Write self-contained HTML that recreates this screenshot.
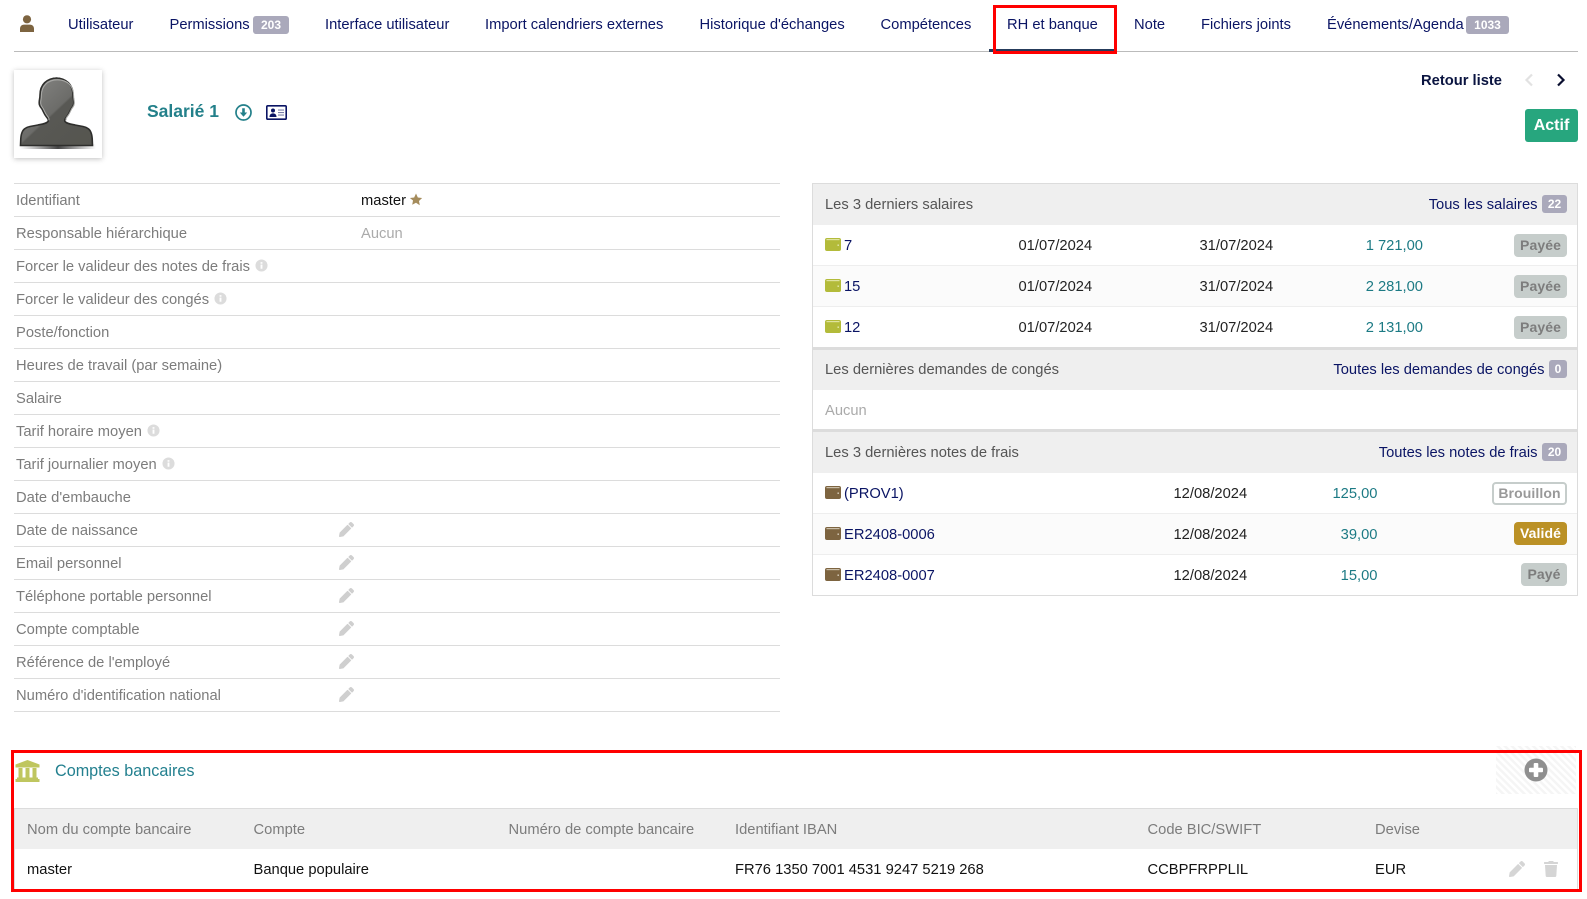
<!DOCTYPE html>
<html lang="fr"><head><meta charset="utf-8"><title>Salarié 1</title>
<style>
html,body{margin:0;padding:0;background:#fff}
body{width:1587px;height:899px;position:relative;overflow:hidden;font-family:"Liberation Sans",Arial,sans-serif;font-size:14.72px;color:#222}
.t{position:absolute;white-space:nowrap;line-height:20px;height:20px;margin-top:1px}
.n{color:#0a1464}
.g{color:#7c7c7c}
.b{position:absolute}
.l{position:absolute;left:14px;width:766px;height:1px;background:#dcdcdc}
.h{position:absolute;left:813px;width:764px;background:#efefef}
.r{position:absolute;left:813px;width:764px;height:1px;background:#eee}
.th{position:absolute;left:813px;width:764px;height:3px;background:#dcdcdc}
.c{position:absolute;background:#aaa9bb;color:#fff;font-weight:bold;font-size:12px;line-height:18px;height:18px;border-radius:3px;text-align:center}
.p{position:absolute;height:23px;line-height:22px;font-size:14px;font-weight:bold;border-radius:4px;text-align:center;background:#c6cdcb;color:#7d7d7d;letter-spacing:.1px;right:20px;box-sizing:border-box}
.tl{color:#1c7a84}
svg{position:absolute;display:block}
</style></head><body>
<svg width="0" height="0" style="position:absolute"><defs>
<symbol id="pen" viewBox="0 0 512 512"><path d="M497.9 142.1l-46.1 46.1c-4.7 4.7-12.3 4.7-17 0l-111-111c-4.7-4.7-4.7-12.3 0-17l46.1-46.1c18.7-18.7 49.1-18.7 67.9 0l60.1 60.1c18.8 18.7 18.8 49.1 0 67.9zM284.2 99.8L21.6 362.4.4 483.9c-2.9 16.4 11.4 30.6 27.8 27.8l121.5-21.3 262.6-262.6c4.7-4.7 4.7-12.3 0-17l-111-111c-4.8-4.7-12.4-4.7-17.1 0z"/></symbol>
<symbol id="inf" viewBox="0 0 14 14"><circle cx="7" cy="7" r="6.5" fill="#dcdcdc"/><rect x="6" y="6" width="2" height="4.5" fill="#fff"/><rect x="6" y="3.4" width="2" height="1.7" fill="#fff"/></symbol>
<symbol id="walg" viewBox="0 0 16 13"><rect width="16" height="13" rx="2" fill="#b3bb3a"/><rect x="1.5" y="1" width="13" height="1.2" fill="#dfe3a0"/><rect x="12.5" y="6.5" width="1.4" height="1.4" fill="#e8ebb8"/></symbol>
<symbol id="walb" viewBox="0 0 16 13"><rect width="16" height="13" rx="2" fill="#7d6440"/><rect x="1.5" y="1" width="13" height="1.2" fill="#c9bda8"/><rect x="12.5" y="6.5" width="1.4" height="1.4" fill="#e0d8c8"/></symbol>
</defs></svg>

<!-- nav -->
<svg style="left:20px;top:15px" width="14" height="17" viewBox="0 0 14 17"><circle cx="7" cy="4.3" r="4.1" fill="#7d6440"/><path d="M0 17v-3.2C0 11 2 9.6 4 9.6h6c2 0 4 1.4 4 4.2V17z" fill="#7d6440"/></svg>
<div class="t n" style="left:68px;top:14px">Utilisateur</div>
<div class="t n" style="left:169.5px;top:14px">Permissions</div><div class="c" style="left:253px;top:16px;width:36px">203</div>
<div class="t n" style="left:325px;top:14px">Interface utilisateur</div>
<div class="t n" style="left:485px;top:14px">Import calendriers externes</div>
<div class="t n" style="left:699.5px;top:14px">Historique d'échanges</div>
<div class="t n" style="left:880.5px;top:14px">Compétences</div>
<div class="t n" style="left:1007px;top:14px">RH et banque</div>
<div class="t n" style="left:1134px;top:14px">Note</div>
<div class="t n" style="left:1201px;top:14px">Fichiers joints</div>
<div class="t n" style="left:1327px;top:14px">Événements/Agenda</div><div class="c" style="left:1466px;top:16px;width:43px">1033</div>
<div class="b" style="left:14px;top:51px;width:1564px;height:1px;background:#bbb"></div>
<div class="b" style="left:989px;top:49px;width:126px;height:3px;background:#263c5c"></div>
<div class="b" style="left:993px;top:5px;width:124px;height:49px;box-sizing:border-box;border:3px solid #f00"></div>

<!-- header -->
<div class="b" style="left:14px;top:70px;width:88px;height:88px;background:#fff;box-shadow:0 1px 5px rgba(0,0,0,.25)"></div>
<svg style="left:14px;top:70px" width="88" height="88" viewBox="0 0 88 88">
<defs><linearGradient id="sh" x1="0" x2="1"><stop offset="0" stop-color="#555" stop-opacity="0"/><stop offset=".5" stop-color="#444"/><stop offset="1" stop-color="#555" stop-opacity="0"/></linearGradient>
<linearGradient id="hd" x1="0" y1="0" x2="1" y2="1"><stop offset="0" stop-color="#8a8a88"/><stop offset=".48" stop-color="#6c6c69"/><stop offset=".5" stop-color="#585854"/><stop offset="1" stop-color="#55554f"/></linearGradient>
<clipPath id="top"><rect x="0" y="0" width="88" height="54"/></clipPath></defs>
<rect x="6" y="74" width="76" height="5" fill="url(#sh)"/>
<path id="sil" d="M43.5 8c-11 0-17.500 7-17.500 17 0 4-.8 4-.8 8 0 3 1.500 4 2.800 6 1.200 2 2 5 4.500 8 1.300 1.500 2.500 3 1.500 4.500-1.500 2-5 2.500-10 3.500l-8 1.500c-4 .8-5.500 2-7 4-1.500 2.500-2 5-2.200 8l-.3 7h72l-.3-7c-.2-3-.7-5.500-2.200-8-1.500-2-3-3.200-7-4l-8-1.500c-5-1-8.500-1.500-10-3.500-1-1.500.2-3 1.500-4.500 2.500-3 3.300-6 4.500-8 1.300-2 2.800-3 2.800-6 0-4-.8-4-.8-8 0-10-6.500-17-17.500-17z" fill="url(#hd)" stroke="#2e2e2c" stroke-width="1.600"/>
<g clip-path="url(#top)"><path transform="translate(43.5 34) scale(.92 .93) translate(-43.5 -34)" d="M43.5 8c-11 0-17.500 7-17.500 17 0 4-.8 4-.8 8 0 3 1.500 4 2.800 6 1.200 2 2 5 4.500 8 1.300 1.500 2.500 3 1.500 4.500M43.5 8c11 0 17.500 7 17.500 17 0 4 .8 4 .8 8 0 3-1.500 4-2.800 6-1.200 2-2 5-4.500 8-1.300 1.500-2.500 3-1.500 4.500" fill="none" stroke="#a9a9a6" stroke-width="1.100"/></g>
</svg>
<div class="t" style="left:147px;top:100px;font-size:17.5px;font-weight:bold;color:#23808a">Salarié 1</div>
<svg style="left:235px;top:104px" width="17" height="17" viewBox="0 0 17 17"><circle cx="8.5" cy="8.5" r="7.5" fill="none" stroke="#23808a" stroke-width="1.700"/><path d="M7.200 4.200h2.600v4.300h2.400L8.500 12.800 4.800 8.500h2.400z" fill="#23808a"/></svg>
<svg style="left:266px;top:105px" width="21" height="15" viewBox="0 0 21 15"><rect x=".8" y=".8" width="19.400" height="13.400" rx="1" fill="#fff" stroke="#0a1464" stroke-width="1.600"/><circle cx="7" cy="5.500" r="2" fill="#0a1464"/><path d="M3.500 12c0-2.500 1.500-3.600 3.500-3.600s3.500 1.100 3.500 3.600z" fill="#0a1464"/><rect x="12" y="4.500" width="6" height="1.100" fill="#7a7fa8"/><rect x="12" y="7" width="6" height="1.100" fill="#7a7fa8"/><rect x="12" y="9.500" width="6" height="1.100" fill="#7a7fa8"/></svg>
<div class="t" style="left:1421px;top:70px;font-weight:bold;color:#0a1440">Retour liste</div>
<svg style="left:1524px;top:73px" width="10" height="14" viewBox="0 0 10 14"><path d="M8 1.500 2.500 7 8 12.500" fill="none" stroke="#e2e2e2" stroke-width="2.200"/></svg>
<svg style="left:1556px;top:73px" width="10" height="14" viewBox="0 0 10 14"><path d="M2 1.500 7.500 7 2 12.500" fill="none" stroke="#0a0f30" stroke-width="2.200"/></svg>
<div class="b" style="left:1525px;top:109px;width:53px;height:33px;background:#27a67e;border-radius:3px;color:#fff;font-weight:bold;font-size:16px;line-height:34px;text-align:center">Actif</div>

<!-- left rows -->
<div class="l" style="top:183px"></div><div class="l" style="top:216px"></div><div class="l" style="top:249px"></div><div class="l" style="top:282px"></div><div class="l" style="top:315px"></div><div class="l" style="top:348px"></div><div class="l" style="top:381px"></div><div class="l" style="top:414px"></div><div class="l" style="top:447px"></div><div class="l" style="top:480px"></div><div class="l" style="top:513px"></div><div class="l" style="top:546px"></div><div class="l" style="top:579px"></div><div class="l" style="top:612px"></div><div class="l" style="top:645px"></div><div class="l" style="top:678px"></div><div class="l" style="top:711px"></div>
<div class="t g" style="left:16px;top:190px">Identifiant</div>
<div class="t" style="left:361px;top:190px;color:#111">master</div>
<svg style="left:409px;top:193px" width="14" height="13" viewBox="0 0 24 24"><path d="M12 1l3.400 7.300 7.900 1-5.800 5.500 1.500 7.900L12 17.900l-7 3.800 1.500-7.900L.7 9.300l7.900-1z" fill="#a58c5c"/></svg>
<div class="t g" style="left:16px;top:223px">Responsable hiérarchique</div>
<div class="t" style="left:361px;top:223px;color:#aaa">Aucun</div>
<div class="t g" style="left:16px;top:256px">Forcer le valideur des notes de frais</div>
<svg style="left:255px;top:259px" width="13" height="13"><use href="#inf"/></svg>
<div class="t g" style="left:16px;top:289px">Forcer le valideur des congés</div>
<svg style="left:214px;top:292px" width="13" height="13"><use href="#inf"/></svg>
<div class="t g" style="left:16px;top:322px">Poste/fonction</div>
<div class="t g" style="left:16px;top:355px">Heures de travail (par semaine)</div>
<div class="t g" style="left:16px;top:388px">Salaire</div>
<div class="t g" style="left:16px;top:421px">Tarif horaire moyen</div>
<svg style="left:147px;top:424px" width="13" height="13"><use href="#inf"/></svg>
<div class="t g" style="left:16px;top:454px">Tarif journalier moyen</div>
<svg style="left:162px;top:457px" width="13" height="13"><use href="#inf"/></svg>
<div class="t g" style="left:16px;top:487px">Date d'embauche</div>
<div class="t g" style="left:16px;top:520px">Date de naissance</div>
<div class="t g" style="left:16px;top:553px">Email personnel</div>
<div class="t g" style="left:16px;top:586px">Téléphone portable personnel</div>
<div class="t g" style="left:16px;top:619px">Compte comptable</div>
<div class="t g" style="left:16px;top:652px">Référence de l'employé</div>
<div class="t g" style="left:16px;top:685px">Numéro d'identification national</div>
<svg style="left:339px;top:522px" width="15" height="15" fill="#cfcfcf"><use href="#pen"/></svg>
<svg style="left:339px;top:555px" width="15" height="15" fill="#cfcfcf"><use href="#pen"/></svg>
<svg style="left:339px;top:588px" width="15" height="15" fill="#cfcfcf"><use href="#pen"/></svg>
<svg style="left:339px;top:621px" width="15" height="15" fill="#cfcfcf"><use href="#pen"/></svg>
<svg style="left:339px;top:654px" width="15" height="15" fill="#cfcfcf"><use href="#pen"/></svg>
<svg style="left:339px;top:687px" width="15" height="15" fill="#cfcfcf"><use href="#pen"/></svg>

<!-- right box -->
<div class="b" style="left:812px;top:183px;width:766px;height:413px;box-sizing:border-box;border:1px solid #dcdcdc"></div>
<div class="h" style="top:184px;height:41px"></div>
<div class="t" style="left:825px;top:194px;color:#555">Les 3 derniers salaires</div>
<div class="t n" style="right:49.5px;top:194px">Tous les salaires</div><div class="c" style="left:1542px;top:195px;width:25px;height:18px">22</div>
<div class="b" style="left:813px;top:266px;width:764px;height:41px;background:#fbfbfb"></div>
<div class="r" style="top:265px"></div><div class="r" style="top:306px"></div>
<svg style="left:825px;top:238px" width="16" height="13"><use href="#walg"/></svg><div class="t n" style="left:844px;top:235px">7</div>
<div class="t" style="left:1018.5px;top:235px">01/07/2024</div><div class="t" style="left:1199.5px;top:235px">31/07/2024</div><div class="t tl" style="right:164px;top:235px">1 721,00</div><div class="p" style="top:234px;width:53px">Payée</div>
<svg style="left:825px;top:279px" width="16" height="13"><use href="#walg"/></svg><div class="t n" style="left:844px;top:276px">15</div>
<div class="t" style="left:1018.5px;top:276px">01/07/2024</div><div class="t" style="left:1199.5px;top:276px">31/07/2024</div><div class="t tl" style="right:164px;top:276px">2 281,00</div><div class="p" style="top:275px;width:53px">Payée</div>
<svg style="left:825px;top:320px" width="16" height="13"><use href="#walg"/></svg><div class="t n" style="left:844px;top:317px">12</div>
<div class="t" style="left:1018.5px;top:317px">01/07/2024</div><div class="t" style="left:1199.5px;top:317px">31/07/2024</div><div class="t tl" style="right:164px;top:317px">2 131,00</div><div class="p" style="top:316px;width:53px">Payée</div>
<div class="th" style="top:347px"></div>
<div class="h" style="top:350px;height:40px"></div>
<div class="t" style="left:825px;top:359px;color:#555">Les dernières demandes de congés</div>
<div class="t n" style="right:42.5px;top:359px">Toutes les demandes de congés</div><div class="c" style="left:1549px;top:360px;width:18px">0</div>
<div class="t" style="left:825px;top:400px;color:#aaa">Aucun</div>
<div class="th" style="top:429px"></div>
<div class="h" style="top:432px;height:41px"></div>
<div class="t" style="left:825px;top:442px;color:#555">Les 3 dernières notes de frais</div>
<div class="t n" style="right:49.5px;top:442px">Toutes les notes de frais</div><div class="c" style="left:1542px;top:443px;width:25px">20</div>
<div class="b" style="left:813px;top:513px;width:764px;height:41px;background:#fbfbfb"></div>
<div class="r" style="top:513px"></div><div class="r" style="top:554px"></div>
<svg style="left:825px;top:486px" width="16" height="13"><use href="#walb"/></svg><div class="t n" style="left:844px;top:483px">(PROV1)</div>
<div class="t" style="left:1173.5px;top:483px">12/08/2024</div><div class="t tl" style="right:209.5px;top:483px">125,00</div>
<div class="p" style="top:482px;left:1492px;right:auto;width:75px;background:#fff;border:2px solid #c6cdcb;color:#999;line-height:19px">Brouillon</div>
<svg style="left:825px;top:527px" width="16" height="13"><use href="#walb"/></svg><div class="t n" style="left:844px;top:524px">ER2408-0006</div>
<div class="t" style="left:1173.5px;top:524px">12/08/2024</div><div class="t tl" style="right:209.5px;top:524px">39,00</div>
<div class="p" style="top:522px;width:53px;background:#bb9126;color:#fff">Validé</div>
<svg style="left:825px;top:568px" width="16" height="13"><use href="#walb"/></svg><div class="t n" style="left:844px;top:565px">ER2408-0007</div>
<div class="t" style="left:1173.5px;top:565px">12/08/2024</div><div class="t tl" style="right:209.5px;top:565px">15,00</div>
<div class="p" style="top:563px;width:46px">Payé</div>

<!-- bank -->
<svg style="left:1496px;top:746px" width="80" height="48"><defs><pattern id="st" width="5" height="5" patternUnits="userSpaceOnUse" patternTransform="rotate(-45)"><rect width="5" height="5" fill="#fff"/><rect width="2.5" height="5" fill="#f5f5f5"/></pattern></defs><rect width="80" height="48" fill="url(#st)"/></svg>
<svg style="left:1524px;top:758px" width="24" height="24" viewBox="0 0 24 24"><circle cx="12" cy="12" r="11.5" fill="#8f8f8f"/><rect x="9.700" y="5" width="4.600" height="14" rx="1" fill="#fff"/><rect x="5" y="9.700" width="14" height="4.600" rx="1" fill="#fff"/></svg>
<svg style="left:15px;top:760px" width="25" height="22" viewBox="0 0 25 22" fill="#bfc65f"><path d="M12.500 0 24.500 4.500V7.500H.5V4.500z"/><rect x="3.500" y="8" width="4" height="10"/><rect x="10.500" y="8" width="4" height="10"/><rect x="17.500" y="8" width="4" height="10"/><rect x="2" y="17.500" width="21" height="1.500"/><rect x=".5" y="19" width="24" height="3"/></svg>
<div class="t" style="left:55px;top:760px;font-size:16.2px;color:#23808f">Comptes bancaires</div>
<div class="b" style="left:14px;top:808px;width:1564px;height:82px;box-sizing:border-box;border:1px solid #dcdcdc"></div>
<div class="b" style="left:15px;top:809px;width:1562px;height:40px;background:#efefef"></div>
<div class="t g" style="left:27px;top:819px">Nom du compte bancaire</div>
<div class="t g" style="left:253.5px;top:819px">Compte</div>
<div class="t g" style="left:508.5px;top:819px">Numéro de compte bancaire</div>
<div class="t g" style="left:735px;top:819px">Identifiant IBAN</div>
<div class="t g" style="left:1147.5px;top:819px">Code BIC/SWIFT</div>
<div class="t g" style="left:1375px;top:819px">Devise</div>
<div class="t" style="left:27px;top:859px;color:#111">master</div>
<div class="t" style="left:253.5px;top:859px;color:#111">Banque populaire</div>
<div class="t" style="left:735px;top:859px;color:#111">FR76 1350 7001 4531 9247 5219 268</div>
<div class="t" style="left:1147.5px;top:859px;color:#111">CCBPFRPPLIL</div>
<div class="t" style="left:1375px;top:859px;color:#111">EUR</div>
<svg style="left:1509px;top:861px" width="16" height="16" fill="#d5d5d5"><use href="#pen"/></svg>
<svg style="left:1544px;top:861px" width="14" height="16" viewBox="0 0 448 512" fill="#d5d5d5"><path d="M432 32H312l-9.400-18.700A24 24 0 0 0 281.100 0H166.800a23.720 23.720 0 0 0-21.400 13.300L136 32H16A16 16 0 0 0 0 48v32a16 16 0 0 0 16 16h416a16 16 0 0 0 16-16V48a16 16 0 0 0-16-16zM53.200 467a48 48 0 0 0 47.900 45h245.800a48 48 0 0 0 47.900-45L416 128H32z"/></svg>
<div class="b" style="left:11px;top:750px;width:1571px;height:142px;box-sizing:border-box;border:3px solid #f00"></div>
</body></html>
